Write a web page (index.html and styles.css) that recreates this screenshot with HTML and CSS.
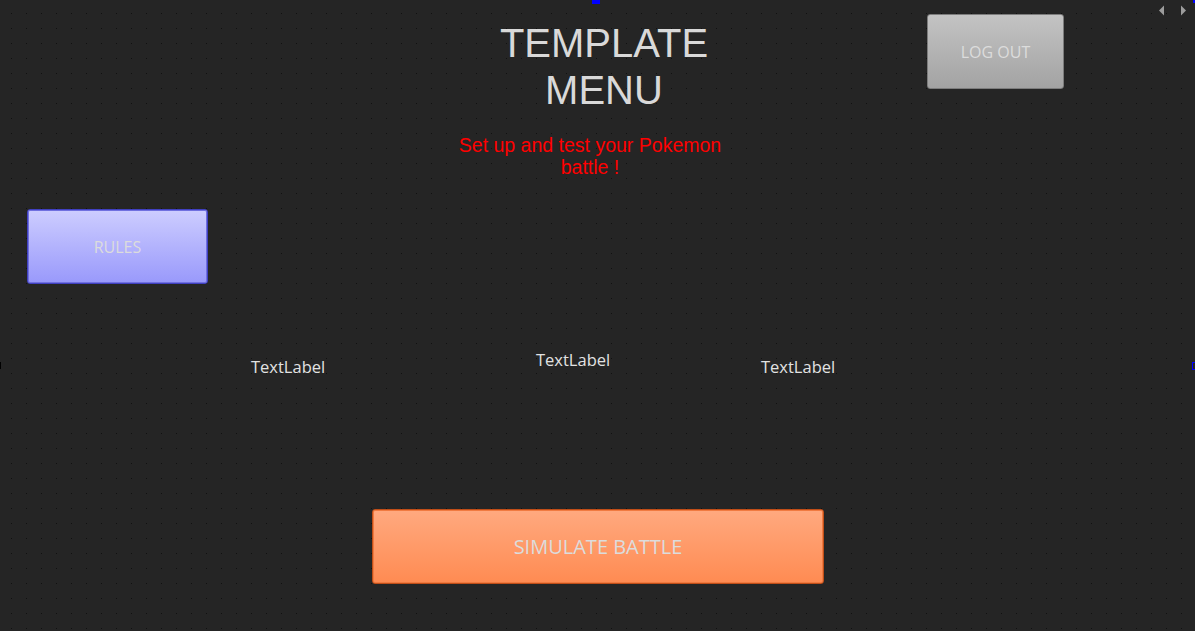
FILE: index.html
```html
<!DOCTYPE html>
<html>
<head>
<meta charset="utf-8">
<title>Template Menu</title>
<link rel="stylesheet" href="styles.css">
</head>
<body>
<div class="form">
  <svg class="grid" width="1195" height="631" aria-hidden="true">
    <defs>
      <pattern id="dots" x="11" y="13" width="15" height="15" patternUnits="userSpaceOnUse">
        <rect x="0" y="0" width="1" height="1" fill="#111111"/>
      </pattern>
    </defs>
    <rect width="1195" height="631" fill="url(#dots)"/>
  </svg>
  <div class="top">
    <div class="titles">
      <h1 class="title">TEMPLATE<br>MENU</h1>
      <p class="subtitle">Set up and test your Pokemon<br>battle !</p>
    </div>
    <button class="btn btn-logout">LOG OUT</button>
  </div>
  <button class="btn btn-rules">RULES</button>
  <div class="labels">
    <span class="label label-low label-1">TextLabel</span>
    <span class="label label-2">TextLabel</span>
    <span class="label label-low label-3">TextLabel</span>
  </div>
  <button class="btn btn-simulate">SIMULATE BATTLE</button>

  <div class="marker marker-top"></div>
  <div class="marker marker-corner"></div>
  <div class="marker marker-right"></div>
  <div class="marker marker-left"></div>
  <div class="nav">
    <svg class="arrow" width="7" height="11" viewBox="0 0 7 11"><path d="M6 0.5 L6 10.5 L1 5.5 Z" fill="#9c9c9c"/></svg>
    <svg class="arrow" width="7" height="11" viewBox="0 0 7 11"><path d="M1 0.5 L1 10.5 L6 5.5 Z" fill="#9c9c9c"/></svg>
  </div>
</div>
</body>
</html>
```

FILE: styles.css
```css
html, body {
  margin: 0;
  padding: 0;
  background: #252525;
}

.form {
  position: relative;
  z-index: 0;
  width: 1195px;
  height: 631px;
  overflow: hidden;
  display: flex;
  flex-direction: column;
  align-items: flex-start;
  background-color: #252525;
}

.grid {
  position: absolute;
  left: 0;
  top: 0;
  z-index: -1;
  display: block;
}

.top {
  display: flex;
  align-items: flex-start;
  height: 209px;
}

.titles {
  margin-left: 440px;
  width: 328px;
  padding-top: 20px;
}

.title {
  margin: 0;
  font-family: "Liberation Sans", Arial, sans-serif;
  font-weight: normal;
  font-size: 40px;
  line-height: 47px;
  color: #d9d9d9;
  text-align: center;
}

.subtitle {
  margin: 20px 0 0;
  width: 300px;
  font-family: "Liberation Sans", Arial, sans-serif;
  font-size: 19.5px;
  line-height: 22px;
  color: #ff0000;
  text-align: center;
}

.btn {
  box-sizing: border-box;
  display: flex;
  align-items: center;
  justify-content: center;
  padding: 0;
  border-radius: 3px;
  font-family: "Open Sans", "Noto Sans", sans-serif;
  font-size: 16px;
  color: #dcdcdc;
  cursor: pointer;
}

.btn-logout {
  margin-left: 159px;
  margin-top: 14px;
  width: 137px;
  height: 75px;
  border: 1px solid #7c7c7c;
  background: linear-gradient(#c3c3c3, #a3a3a3);
}

.btn-rules {
  margin-left: 27px;
  width: 181px;
  height: 75px;
  border: 1px solid #4040c0;
  box-shadow: inset 0 0 0 1px #7070e0;
  background: linear-gradient(#cdcdff, #9999fb);
}

.labels {
  display: flex;
  align-items: flex-start;
  height: 30px;
  margin-top: 66px;
}

.label {
  width: 80px;
  font-family: "Open Sans", "Noto Sans", sans-serif;
  font-size: 16.5px;
  line-height: 20px;
  color: #e2e2e2;
  white-space: nowrap;
}

.label-low {
  margin-top: 7px;
}

.label-1 { margin-left: 251px; }
.label-2 { margin-left: 205px; }
.label-3 { margin-left: 145px; }

.btn-simulate {
  margin-left: 372px;
  margin-top: 129px;
  width: 452px;
  height: 75px;
  border: 1px solid #c04e18;
  box-shadow: inset 0 0 0 1px #f07a40;
  background: linear-gradient(#ffa97f, #ff8b52);
  font-size: 20px;
}

.marker {
  position: absolute;
}

.marker-top {
  left: 592px;
  top: 0;
  width: 8px;
  height: 4px;
  background: #0000ff;
}

.marker-corner {
  left: 1193px;
  top: 0;
  width: 2px;
  height: 3px;
  background: #0000ff;
}

.marker-right {
  left: 1192px;
  top: 362px;
  width: 5px;
  height: 6px;
  border: 1px solid #0000ff;
  box-sizing: content-box;
}

.marker-left {
  left: 0;
  top: 362px;
  width: 1px;
  height: 7px;
  background: #000000;
}

.nav {
  position: absolute;
  left: 1158px;
  top: 5px;
  display: flex;
  gap: 15px;
}

.arrow {
  display: block;
}
```
